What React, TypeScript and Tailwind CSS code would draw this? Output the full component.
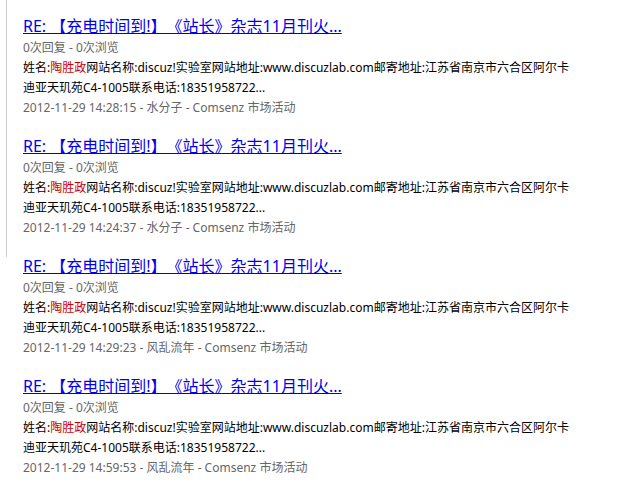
import React from "react";

type Post = {
  time: string;
  author: string;
};

const POSTS: Post[] = [
  { time: "2012-11-29 14:28:15", author: "水分子" },
  { time: "2012-11-29 14:24:37", author: "水分子" },
  { time: "2012-11-29 14:29:23", author: "风乱流年" },
  { time: "2012-11-29 14:59:53", author: "风乱流年" },
];

const FONT =
  "font-['Noto_Sans','Noto_Sans_CJK_SC',sans-serif]";

export default function App() {
  return (
    <div className={`min-h-[482px] w-[631px] bg-white ${FONT} [text-spacing-trim:space-all]`}>
      <div className="relative pt-[14px] pl-[23px]">
        {/* left rule */}
        <div className="absolute left-[6px] top-0 h-[257px] w-px bg-[#cccccc]" />

        <ul className="flex flex-col gap-4">
          {POSTS.map((post, i) => (
            <li key={i} className="text-[12px]">
              <a
                href="#"
                className="block h-6 text-[16px] leading-6 text-[#0000ee] underline"
              >
                RE: 【充电时间到!】《站长》杂志11月刊火...
              </a>
              <p className="leading-5 text-[#666666]">0次回复 - 0次浏览</p>
              <p className="leading-5 text-black whitespace-nowrap">
                姓名:<span className="text-[#cc0000]">陶胜政</span>
                网站名称:discuz!实验室网站地址:www.discuzlab.com邮寄地址:江苏省南京市六合区阿尔卡
                <br />
                迪亚天玑苑C4-1005联系电话:18351958722...
              </p>
              <p className="leading-5 text-[#666666]">
                {post.time} - {post.author} - Comsenz 市场活动
              </p>
            </li>
          ))}
        </ul>
      </div>
    </div>
  );
}
